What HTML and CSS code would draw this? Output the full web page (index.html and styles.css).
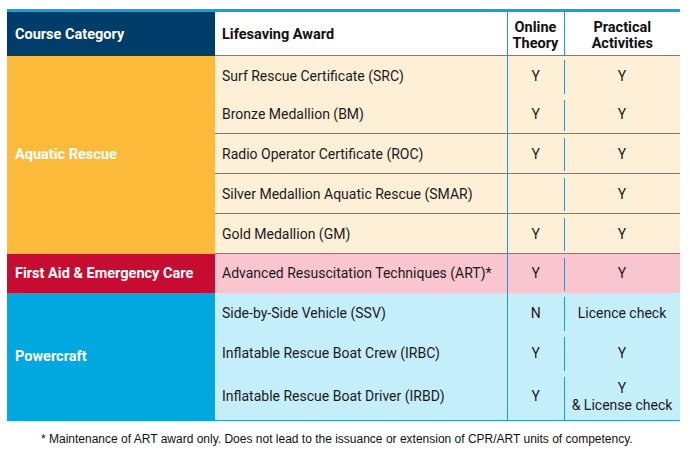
FILE: index.html
```html
<!DOCTYPE html>
<html>
<head>
<meta charset="utf-8">
<link rel="stylesheet" href="styles.css">
</head>
<body>
<div class="page">
  <table class="awards">
    <thead>
      <tr class="head">
        <th class="cat-head">Course Category</th>
        <th class="award-head">Lifesaving Award</th>
        <th class="mid-head">Online<br>Theory</th>
        <th class="mid-head last">Practical<br>Activities</th>
      </tr>
    </thead>
    <tbody>
      <tr class="aq r1">
        <td class="cat aquatic" rowspan="5">Aquatic Rescue</td>
        <td class="award">Surf Rescue Certificate (SRC)</td>
        <td class="yn">Y</td>
        <td class="pr">Y</td>
      </tr>
      <tr class="aq r2">
        <td class="award">Bronze Medallion (BM)</td>
        <td class="yn">Y</td>
        <td class="pr">Y</td>
      </tr>
      <tr class="aq lined">
        <td class="award">Radio Operator Certificate (ROC)</td>
        <td class="yn">Y</td>
        <td class="pr">Y</td>
      </tr>
      <tr class="aq lined">
        <td class="award">Silver Medallion Aquatic Rescue (SMAR)</td>
        <td class="yn"></td>
        <td class="pr">Y</td>
      </tr>
      <tr class="aq lined">
        <td class="award">Gold Medallion (GM)</td>
        <td class="yn">Y</td>
        <td class="pr">Y</td>
      </tr>
      <tr class="fa">
        <td class="cat firstaid">First Aid &amp; Emergency Care</td>
        <td class="award">Advanced Resuscitation Techniques (ART)*</td>
        <td class="yn">Y</td>
        <td class="pr">Y</td>
      </tr>
      <tr class="pc">
        <td class="cat power" rowspan="3">Powercraft</td>
        <td class="award">Side-by-Side Vehicle (SSV)</td>
        <td class="yn">N</td>
        <td class="pr">Licence check</td>
      </tr>
      <tr class="pc">
        <td class="award">Inflatable Rescue Boat Crew (IRBC)</td>
        <td class="yn">Y</td>
        <td class="pr">Y</td>
      </tr>
      <tr class="pc tall">
        <td class="award">Inflatable Rescue Boat Driver (IRBD)</td>
        <td class="yn">Y</td>
        <td class="pr two">Y<br>&amp; License check</td>
      </tr>
    </tbody>
  </table>
  <p class="note">* Maintenance of ART award only. Does not lead to the issuance or extension of CPR/ART units of competency.</p>
</div>
</body>
</html>
```

FILE: styles.css
```css
html, body {
  margin: 0;
  padding: 0;
  background: #ffffff;
}

.page {
  padding: 9px 10px 0 7px;
}

.awards {
  width: 673px;
  border-collapse: collapse;
  border-spacing: 0;
  table-layout: fixed;
  font-family: Roboto, "Liberation Sans", sans-serif;
  font-size: 14px;
  color: #1a1a1a;
  border-top: 3px solid #00a9e0;
}

.awards th,
.awards td {
  box-sizing: border-box;
  padding: 0;
  vertical-align: middle;
}

.cat-head { width: 208px; }
.award-head { width: 292px; }
.awards th.mid-head { width: 57px; }
.awards th.mid-head.last { width: 116px; }

.head {
  height: 45px;
}

.head th {
  font-weight: 700;
  font-size: 14.5px;
  color: #111;
  line-height: 16px;
  border-bottom: 1px solid #1a9ad6;
  text-align: center;
}

.head th.cat-head {
  background: #003d6b;
  color: #ffffff;
  text-align: left;
  padding-left: 8px;
  padding-top: 2px;
  border-bottom: none;
}

.head th.award-head {
  text-align: left;
  padding-left: 7px;
  padding-top: 2px;
}

.head th.mid-head {
  border-left: 1px solid #1a9ad6;
  padding-top: 5px;
}

.awards tbody tr { height: 40px; }
.awards tbody tr.r2 { height: 38px; }
.awards tbody tr.fa { height: 39px; }
.awards tbody tr.tall { height: 48px; }

.aq td { background: #feefd7; }
.fa td { background: #f9c6d0; }
.pc td { background: #c5eefb; }

.lined td.award,
.lined td.yn,
.lined td.pr,
.fa td.award,
.fa td.yn,
.fa td.pr {
  border-top: 1px solid #1a9ad6;
}

.pc.tall td.award,
.pc.tall td.yn,
.pc.tall td.pr {
  border-bottom: 1px solid #1a9ad6;
}

td.cat {
  color: #ffffff;
  font-weight: 700;
  font-size: 14.5px;
  padding-left: 8px;
}

.awards td.aquatic { background: #fdbb3c; }
.awards td.firstaid { background: #c60c30; }
.awards td.power { background: #00a8df; }

.awards td.award {
  padding-left: 7px;
}

td.yn {
  text-align: center;
  border-left: 1px solid #1a9ad6;
}

.awards td.pr {
  text-align: center;
  background-image: linear-gradient(#1a9ad6, #1a9ad6);
  background-repeat: no-repeat;
  background-position: 0 4px;
  background-size: 1px calc(100% - 6px);
}

.awards td.pr.two {
  line-height: 17px;
  padding-top: 2px;
  background-size: 1px calc(100% - 4px);
}

.note {
  margin: 11px 0 0 34px;
  font-family: "Liberation Sans", Arial, sans-serif;
  font-size: 12px;
  color: #111;
}
```
